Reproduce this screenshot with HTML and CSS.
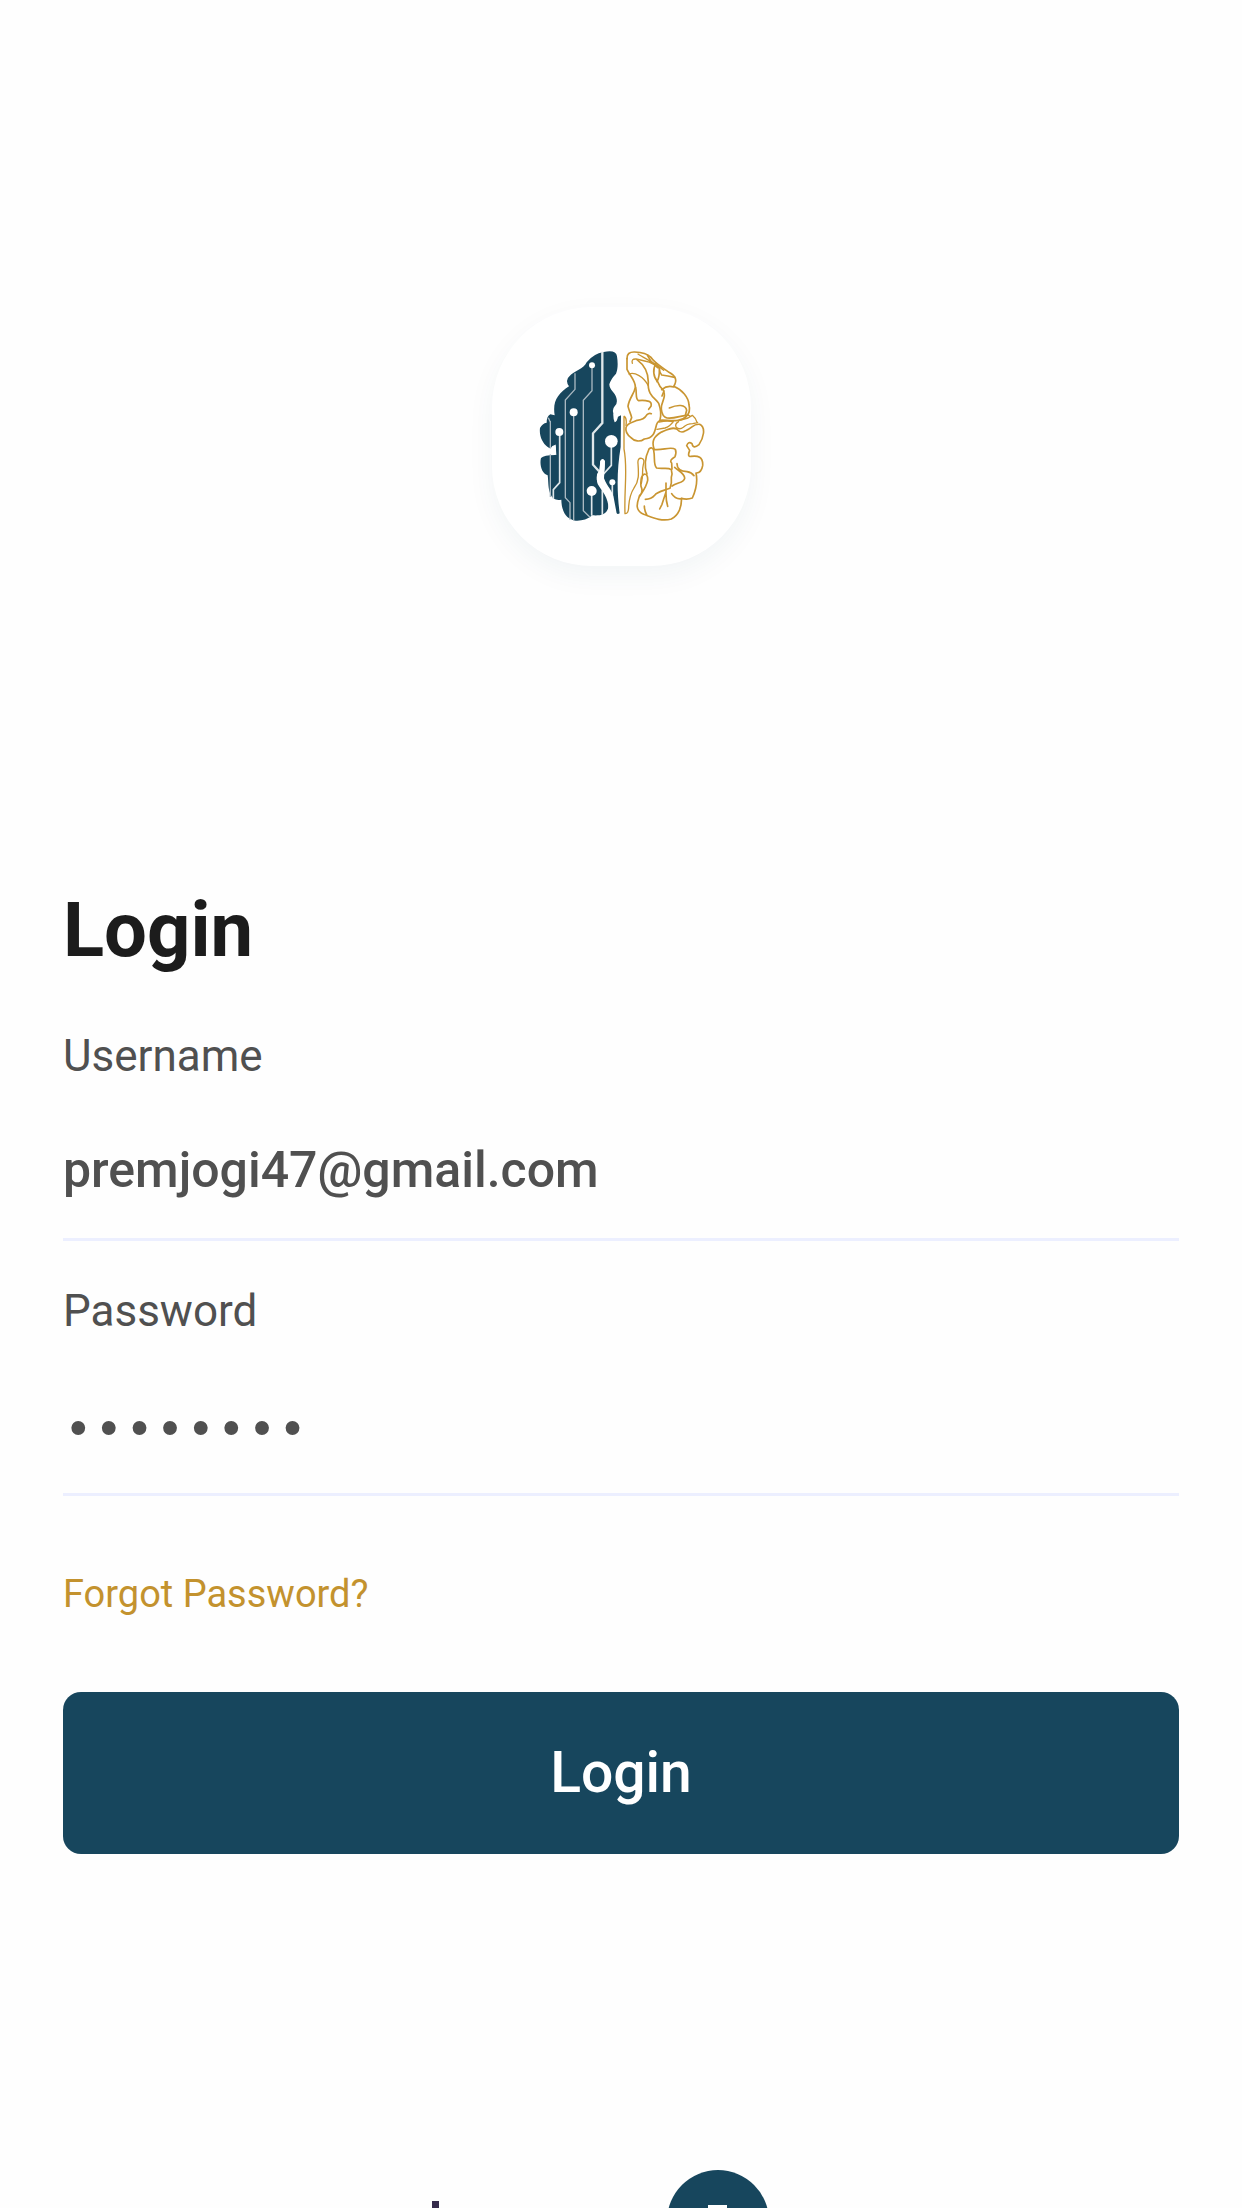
FILE: index.html
```html
<!DOCTYPE html>
<html lang="en">
<head>
<meta charset="utf-8">
<meta name="viewport" content="width=device-width, initial-scale=1">
<title>Login</title>
<link rel="stylesheet" href="styles.css">
</head>
<body>
<main class="page">
  <div class="logo">
    <svg class="logo-art" viewBox="65 80 777 777" role="img" aria-label="Brain logo">
      <path fill="#17465d" d="M400 215Q437 207 440 228C443 248 443 265 437 280Q421 297 417 312C417 329 435 338 438 352Q443 369 433 378Q425 387 429 398Q428 415 433 426Q440 424 443 409L452 405L451 500C440 565 439 630 448 699Q436 706 431 684C428 650 417 622 401 605C393 593 406 574 403 542Q397 530 390 542L387 569Q375 585 381 604C391 628 419 645 414 681C409 705 388 706 366 705C351 718 333 722 316 721C291 717 274 699 273 658Q249 662 242 645C232 626 235 604 232 585C214 580 207 552 212 533Q221 524 254 524Q260 508 254 494L246 497Q241 508 232 500C216 488 206 466 209 443Q216 429 229 427Q229 408 240 402L253 405C246 362 263 340 296 318Q283 299 298 287C310 273 341 265 349 246Q369 220 400 215Z"/>
      <g fill="none" stroke="#a9b8c1" stroke-width="4">
        <path d="M314 279V327L285 359V652L299 667V718M365 255V331L339 360V691L359 711M310 397V720M240 422V650M234 412L240 426"/>
      </g>
      <g fill="none" stroke="#dfe7ea" stroke-width="5">
        <path d="M268 455V607L249 628V656M364 632V706M426 606V690M396 630V704M423 483V555L397 584"/>
        <path stroke-width="7" d="M396 214V428L368 459V553L390 577"/>
      </g>
      <g fill="#fff">
        <circle cx="365" cy="255" r="9"/><circle cx="310" cy="396" r="12"/><circle cx="267" cy="455" r="12"/>
        <circle cx="423" cy="483" r="19"/><circle cx="364" cy="632" r="15"/><circle cx="426" cy="606" r="9"/>
        <path d="M234 506L247 504L256 492L258 524L235 521Q226 514 234 506ZM390 542Q397 532 404 542L401 594C410 619 429 633 431 657L440 705L412 704C422 658 398 638 382 611Q375 590 388 568Z"/>
      </g>
      <g fill="none" stroke="#c99531" stroke-width="5" stroke-linecap="round" stroke-linejoin="round">
        <path d="M470 235Q469 214 493 215C518 216 534 223 541 230C554 250 579 263 596 276C618 288 621 301 610 318C635 328 655 351 656 374C660 389 655 402 647 409C631 426 604 420 575 419Q562 420 558 435C553 456 550 474 522 476C509 486 492 483 481 471Q464 458 467 442C471 425 488 427 500 420Q521 419 530 403Q536 397 543 400"/>
        <path d="M470 235V267C481 290 496 302 495 321C492 340 476 354 473 378C477 394 482 401 484 412L479 424"/>
        <path d="M496 321C500 337 494 357 505 361Q521 359 536 363Q545 367 542 378L535 387"/>
        <path stroke-width="4" d="M476 281C493 274 520 289 534 316M486 249Q482 235 497 236C521 241 545 244 567 264M503 221C524 235 554 248 580 270"/>
        <path d="M500 238C527 258 534 280 534 305C530 345 556 354 565 369Q575 397 569 419M557 249C546 267 549 291 562 304Q568 321 581 332L575 347"/>
        <path d="M531 224L542 243L562 262M567 264Q567 276 574 284Q592 287 613 291M567 266Q568 290 560 304M574 328Q591 314 610 320M580 334C589 352 571 365 573 386Q575 409 590 413C612 416 630 406 647 405M597 383C622 372 646 372 649 390L645 405"/>
        <path stroke-width="4" d="M461 408V506C473 566 461 624 464 700M462 408Q470 414 467 435M464 700Q475 701 475 678C477 654 481 638 491 623C507 602 505 579 503 550Q501 532 514 534Q524 536 519 553C514 572 520 582 513 610"/>
        <path d="M551 505C544 484 549 470 572 456C590 448 605 439 619 446Q632 461 646 451C668 443 667 430 688 432C708 442 699 473 686 493Q668 508 665 490Q654 482 649 496L658 510Q650 531 662 528C682 525 699 529 697 556Q693 579 677 578C684 609 674 635 666 653Q650 659 633 654C635 679 625 704 603 716C572 725 543 710 520 702C490 688 502 664 508 645Q520 635 512 618Q509 588 522 581Q533 581 532 600C527 624 514 636 506 651"/>
        <path d="M530 581C518 549 530 519 536 506Q546 498 550 510C555 532 548 554 559 563C577 567 592 560 603 568Q607 580 603 591C605 605 602 615 599 624C577 632 560 634 553 645Q543 657 525 657M550 507C573 512 602 497 615 507Q619 516 614 529Q595 540 604 548L605 566"/>
        <path d="M620 550C620 566 634 573 650 574Q664 576 671 586M613 561C625 572 644 580 643 594C641 608 620 606 605 617M604 640Q615 658 635 655M587 608V640Q587 662 592 678M587 635Q580 656 575 672L568 686M522 677Q522 690 529 703"/>
        <path stroke-width="4" d="M566 425Q591 420 609 424Q598 439 584 443L560 447M625 424Q613 430 617 440Q627 450 639 441Q650 430 667 430L682 427M631 419L653 413L666 405Q675 412 680 426M650 402L660 408"/>
      </g>
    </svg>
  </div>
  <form class="login">
    <h1 class="title">Login</h1>
    <div class="field">
      <label class="label" for="username">Username</label>
      <input class="input" id="username" type="text" value="premjogi47@gmail.com">
    </div>
    <div class="field">
      <label class="label" for="password">Password</label>
      <input class="input input-password" id="password" type="password" value="password">
    </div>
    <a class="forgot" href="#">Forgot Password?</a>
    <button class="submit" type="button">Login</button>
  </form>
  <footer class="footer">
    <svg class="footer-art" viewBox="430 2169 382 39" aria-hidden="true">
      <path fill="#352b4b" d="M432 2201h7v7h-7z"/>
      <circle cx="718" cy="2221" r="51" fill="#17465d"/>
      <path fill="#fff" d="M708 2205h19v3h-19z"/>
    </svg>
  </footer>
</main>
</body>
</html>
```
FILE: styles.css
```css
* {
  box-sizing: border-box;
}

body {
  margin: 0;
  background: #fefefe;
  color: #505050;
  font-family: Roboto, "Liberation Sans", sans-serif;
}

.page {
  display: flex;
  flex-direction: column;
  min-height: 100vh;
  padding: 307px 63px 0;
}

.logo {
  align-self: center;
  width: 259px;
  height: 259px;
  border-radius: 100px;
  background: #fff;
  box-shadow: 0 10px 28px rgba(23, 70, 93, 0.05);
}

.logo-art {
  display: block;
  width: 100%;
}

.login {
  display: flex;
  flex-direction: column;
  margin-top: 320px;
}

.title {
  margin: 0 0 32px;
  color: #1c1c1c;
  font-size: 76px;
  font-weight: 700;
  line-height: 88px;
}

.field {
  display: flex;
  flex-direction: column;
  padding: 24px 0 20px;
}

.label {
  margin-bottom: 19px;
  font-size: 44px;
  line-height: 52px;
}

.input {
  width: 100%;
  height: 140px;
  margin: 0;
  padding: 0;
  border: 0;
  border-bottom: 3px solid #ecefff;
  outline: 0;
  background: transparent;
  color: inherit;
  font: 500 50px/60px Roboto, "Liberation Sans", sans-serif;
}

.input-password {
  padding-top: 14px;
  font-family: "Liberation Mono", monospace;
  font-size: 51px;
}

.forgot {
  align-self: flex-start;
  margin: 56px 0 76px;
  color: #c3922e;
  font-size: 38px;
  line-height: 44px;
  text-decoration: none;
}

.submit {
  width: 100%;
  height: 162px;
  padding: 0;
  border: 0;
  border-radius: 18px;
  background: #17465d;
  color: #fff;
  font: 500 57px/68px Roboto, "Liberation Sans", sans-serif;
}

.footer {
  display: flex;
  justify-content: center;
  margin-top: auto;
}

.footer-art {
  display: block;
  width: 382px;
}
```
